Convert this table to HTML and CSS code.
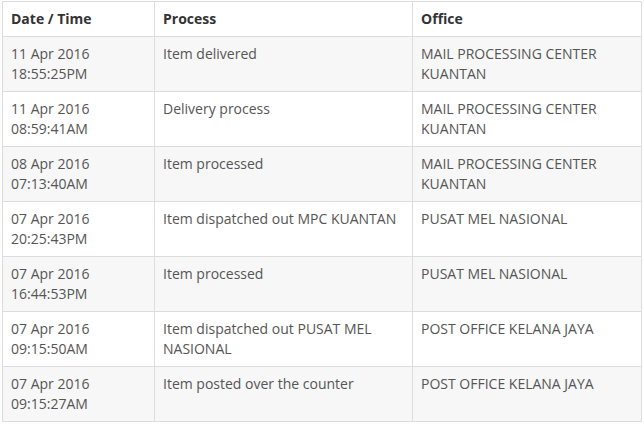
FILE: index.html
```html
<!DOCTYPE html>
<html>
<head>
<meta charset="utf-8">
<link rel="stylesheet" href="styles.css">
</head>
<body>
<table class="track">
  <thead>
    <tr><th class="c1">Date / Time</th><th class="c2">Process</th><th class="c3">Office</th></tr>
  </thead>
  <tbody>
    <tr><td>11 Apr 2016<br>18:55:25PM</td><td>Item delivered</td><td>MAIL PROCESSING CENTER<br>KUANTAN</td></tr>
    <tr><td>11 Apr 2016<br>08:59:41AM</td><td>Delivery process</td><td>MAIL PROCESSING CENTER<br>KUANTAN</td></tr>
    <tr><td>08 Apr 2016<br>07:13:40AM</td><td>Item processed</td><td>MAIL PROCESSING CENTER<br>KUANTAN</td></tr>
    <tr><td>07 Apr 2016<br>20:25:43PM</td><td>Item dispatched out MPC KUANTAN</td><td>PUSAT MEL NASIONAL</td></tr>
    <tr><td>07 Apr 2016<br>16:44:53PM</td><td>Item processed</td><td>PUSAT MEL NASIONAL</td></tr>
    <tr><td>07 Apr 2016<br>09:15:50AM</td><td>Item dispatched out PUSAT MEL<br>NASIONAL</td><td>POST OFFICE KELANA JAYA</td></tr>
    <tr><td>07 Apr 2016<br>09:15:27AM</td><td>Item posted over the counter</td><td>POST OFFICE KELANA JAYA</td></tr>
  </tbody>
</table>
</body>
</html>
```
FILE: styles.css
```css
html, body {
  margin: 0;
  padding: 0;
  background: #fff;
}
body {
  padding: 1px 2px 0 2px;
  font-family: "Open Sans", "Noto Sans", sans-serif;
  font-size: 14px;
  color: #555;
}
.track {
  width: 640px;
  border-collapse: collapse;
  border: 1px solid #ddd;
}
.track th, .track td {
  border: 1px solid #ddd;
  padding: 7px 8px;
  line-height: 20px;
  text-align: left;
  vertical-align: top;
}
.track th {
  color: #333;
  font-weight: bold;
}
.c1 { width: 135px; }
.c2 { width: 241px; }
.track tbody tr:nth-child(odd) td {
  background: #f7f7f7;
}
```
